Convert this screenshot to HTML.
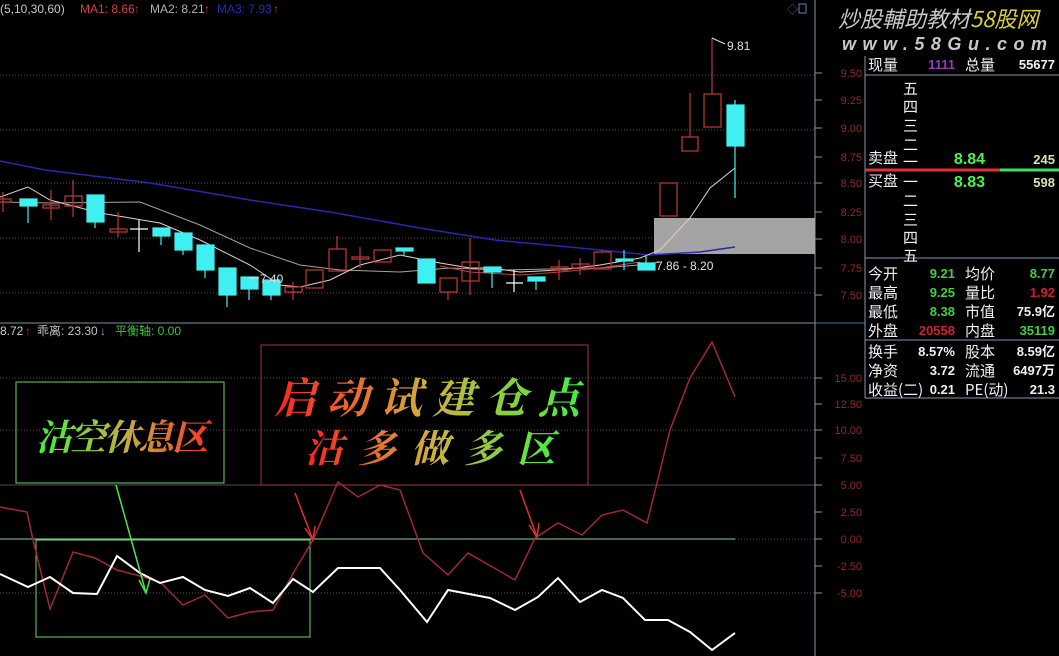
<!DOCTYPE html>
<html><head><meta charset="utf-8"><style>
body{margin:0;background:#000;width:1059px;height:656px;overflow:hidden;font-family:"Liberation Sans","Noto Sans CJK SC",sans-serif;}
svg{display:block}
</style></head><body>
<svg width="1059" height="656" xmlns="http://www.w3.org/2000/svg" font-family="Liberation Sans, Noto Sans CJK SC, sans-serif">
<defs>
<linearGradient id="g1" x1="0" x2="1" y1="0" y2="0"><stop offset="0" stop-color="#40f040"/><stop offset="0.5" stop-color="#c0b040"/><stop offset="1" stop-color="#ff3020"/></linearGradient>
<linearGradient id="g2" x1="0" x2="1" y1="0" y2="0"><stop offset="0" stop-color="#ff2020"/><stop offset="0.5" stop-color="#d0b040"/><stop offset="1" stop-color="#40f040"/></linearGradient>
</defs>
<rect width="1059" height="656" fill="#000"/>
<text x="0" y="13" font-size="12" fill="#c8c8c8">(5,10,30,60)</text>
<text x="80" y="13" font-size="12" fill="#d04050">MA1: 8.66</text><text x="134" y="13" font-size="12" fill="#d03030">↑</text>
<text x="150" y="13" font-size="12" fill="#b0b0b0">MA2: 8.21</text><text x="204" y="13" font-size="12" fill="#d03030">↑</text>
<text x="217" y="13" font-size="12" fill="#2030b0">MA3: 7.93</text><text x="273" y="13" font-size="12" fill="#d03030">↑</text>
<text x="787" y="13" font-size="11" fill="#606060">◇</text><rect x="799" y="4" width="7" height="9" fill="none" stroke="#6080c0"/>
<g stroke="#505050" stroke-dasharray="1,2">
<line x1="0" y1="75" x2="815" y2="75"/><line x1="0" y1="130" x2="815" y2="130"/><line x1="0" y1="183" x2="815" y2="183"/><line x1="0" y1="238" x2="815" y2="238"/><line x1="0" y1="293" x2="815" y2="293"/>
<line x1="0" y1="378" x2="815" y2="378"/><line x1="0" y1="430" x2="815" y2="430"/><line x1="735" y1="539" x2="815" y2="539"/><line x1="0" y1="593" x2="815" y2="593"/>
</g>
<line x1="0" y1="485" x2="815" y2="485" stroke="#505050"/>
<line x1="0" y1="323" x2="815" y2="323" stroke="#8090a0"/>
<line x1="815" y1="323" x2="865" y2="323" stroke="#4070a0"/>
<line x1="815" y1="0" x2="815" y2="656" stroke="#8098b0"/>
<g stroke="#8098b0"><line x1="815" y1="73" x2="822" y2="73"/><line x1="815" y1="100" x2="822" y2="100"/><line x1="815" y1="128" x2="822" y2="128"/><line x1="815" y1="157" x2="822" y2="157"/><line x1="815" y1="183" x2="822" y2="183"/><line x1="815" y1="212" x2="822" y2="212"/><line x1="815" y1="239" x2="822" y2="239"/><line x1="815" y1="268" x2="822" y2="268"/><line x1="815" y1="295" x2="822" y2="295"/>
<line x1="815" y1="378" x2="822" y2="378"/><line x1="815" y1="404" x2="822" y2="404"/><line x1="815" y1="430" x2="822" y2="430"/><line x1="815" y1="458" x2="822" y2="458"/><line x1="815" y1="485" x2="822" y2="485"/><line x1="815" y1="512" x2="822" y2="512"/><line x1="815" y1="539" x2="822" y2="539"/><line x1="815" y1="566" x2="822" y2="566"/><line x1="815" y1="593" x2="822" y2="593"/></g>
<g font-size="11" fill="#902830" text-anchor="end">
<text x="862" y="77">9.50</text><text x="862" y="104">9.25</text><text x="862" y="132">9.00</text><text x="862" y="161">8.75</text><text x="862" y="187">8.50</text><text x="862" y="216">8.25</text><text x="862" y="243">8.00</text><text x="862" y="272">7.75</text><text x="862" y="299">7.50</text>
<text x="862" y="382">15.00</text><text x="862" y="408">12.50</text><text x="862" y="434">10.00</text><text x="862" y="462">7.50</text><text x="862" y="489">5.00</text><text x="862" y="516">2.50</text><text x="862" y="543">0.00</text><text x="862" y="570">-2.50</text><text x="862" y="597">-5.00</text>
</g>
<rect x="654" y="218" width="161" height="36" fill="#a4a4a4"/>
<polyline fill="none" stroke="#2828b0" stroke-width="1.5" points="0,161 45,170 150,183 250,200 330,212 420,228 495,240 580,248 650,255 700,252 735,247"/>
<polyline fill="none" stroke="#a8a098" points="0,202 50,203 140,202 200,225 250,248 300,265 340,270 400,272 450,268 500,270 600,268 640,265 660,262"/>
<polyline fill="none" stroke="#e8d0c8" points="0,197 28,187 50,200 100,213 130,218 160,223 200,240 250,265 280,285 300,287 330,280 360,265 400,255 440,263 470,268 490,268 520,272 560,270 600,265 640,258 660,250 690,218 710,188 735,168"/>
<polyline fill="none" stroke="#c04040" points="440,266 470,272 520,275 560,272 600,268 640,262"/>
<g fill="none" stroke="#c03838" stroke-width="1.2">
<line x1="3" y1="192" x2="3" y2="212"/><rect x="-5" y="199" width="16" height="3"/>
<line x1="51" y1="190" x2="51" y2="220"/><rect x="43" y="205" width="16" height="3"/>
<line x1="73" y1="180" x2="73" y2="217"/><rect x="65" y="196" width="17" height="10"/>
<line x1="118" y1="212" x2="118" y2="237"/><rect x="110" y="229" width="17" height="3"/>
<line x1="293" y1="282" x2="293" y2="300"/><rect x="285" y="287" width="17" height="5"/>
<rect x="306" y="270" width="17" height="18"/>
<line x1="337" y1="236" x2="337" y2="249"/><rect x="329" y="249" width="17" height="22"/>
<line x1="360" y1="247" x2="360" y2="268"/><rect x="352" y="257" width="17" height="2"/>
<rect x="374" y="250" width="17" height="12"/>
<line x1="448" y1="292" x2="448" y2="300"/><rect x="440" y="278" width="17" height="14"/>
<line x1="470" y1="238" x2="470" y2="295"/><rect x="462" y="262" width="17" height="19"/>
<line x1="559" y1="260" x2="559" y2="280"/><rect x="551" y="267" width="17" height="3"/>
<line x1="580" y1="258" x2="580" y2="275"/><rect x="572" y="264" width="17" height="4"/>
<line x1="602" y1="250" x2="602" y2="252"/><rect x="594" y="252" width="17" height="17"/>
<rect x="660" y="183" width="17" height="33"/>
<line x1="690" y1="93" x2="690" y2="137"/><rect x="682" y="137" width="16" height="14"/>
<line x1="712" y1="38" x2="712" y2="94"/><rect x="704" y="94" width="17" height="33"/>
</g>
<g fill="#40f0f0" stroke="#40f0f0" stroke-width="1.2">
<line x1="28" y1="199" x2="28" y2="223"/><rect x="20" y="199" width="17" height="7"/>
<line x1="95" y1="195" x2="95" y2="228"/><rect x="87" y="195" width="17" height="27"/>
<line x1="161" y1="228" x2="161" y2="245"/><rect x="153" y="228" width="17" height="8"/>
<line x1="183" y1="233" x2="183" y2="255"/><rect x="175" y="233" width="17" height="17"/>
<line x1="205" y1="245" x2="205" y2="278"/><rect x="197" y="245" width="17" height="25"/>
<line x1="227" y1="268" x2="227" y2="307"/><rect x="219" y="268" width="17" height="27"/>
<line x1="249" y1="277" x2="249" y2="300"/><rect x="241" y="277" width="17" height="12"/>
<line x1="271" y1="280" x2="271" y2="300"/><rect x="263" y="280" width="17" height="15"/>
<line x1="404" y1="248" x2="404" y2="255"/><rect x="396" y="248" width="17" height="3"/>
<line x1="426" y1="259" x2="426" y2="283"/><rect x="418" y="259" width="17" height="24"/>
<line x1="492" y1="267" x2="492" y2="288"/><rect x="484" y="267" width="17" height="5"/>
<line x1="536" y1="277" x2="536" y2="290"/><rect x="528" y="277" width="17" height="4"/>
<line x1="624" y1="250" x2="624" y2="270"/><rect x="616" y="259" width="17" height="2"/>
<line x1="646" y1="255" x2="646" y2="270"/><rect x="638" y="263" width="17" height="7"/>
<line x1="735" y1="100" x2="735" y2="198"/><rect x="727" y="105" width="17" height="41"/>
</g>
<g stroke="#fff" stroke-width="1.2"><line x1="139" y1="220" x2="139" y2="252"/><line x1="130" y1="229" x2="148" y2="229"/>
<line x1="514" y1="270" x2="514" y2="292"/><line x1="506" y1="283" x2="523" y2="283"/></g>
<g font-size="12" fill="#e0e0e0"><text x="727" y="50">9.81</text><text x="656" y="270">7.86 - 8.20</text><text x="260" y="283">7.40</text></g>
<g stroke="#e0e0e0"><line x1="712" y1="38" x2="725" y2="44"/><line x1="249" y1="278" x2="259" y2="278"/></g>
<text x="0" y="335" font-size="12" fill="#d0d0d0">8.72</text><text x="25" y="335" font-size="12" fill="#c03030">↑</text>
<text x="37" y="335" font-size="12" fill="#c0c0c0">乖离: 23.30</text><text x="100" y="335" font-size="12" fill="#a0a0c0">↓</text>
<text x="115" y="335" font-size="12" fill="#40c040">平衡轴: 0.00</text>
<rect x="16" y="382" width="208" height="101" fill="none" stroke="#70d070"/>
<rect x="261" y="345" width="327" height="140" fill="none" stroke="#a03848"/>
<line x1="0" y1="539" x2="735" y2="539" stroke="#90d090"/>
<rect x="36" y="540" width="274" height="97" fill="none" stroke="#70d070"/>
<polyline fill="none" stroke="#a02838" stroke-width="1.5" points="0,507 27,512 33,540 50,609 73,552 95,558 117,570 140,576 160,582 183,605 205,595 228,618 250,612 273,610 295,570 313,540 338,482 358,497 380,485 400,490 423,553 448,575 468,553 515,580 535,538 558,523 582,535 602,515 623,510 647,523 657,483 670,430 690,378 712,342 735,397"/>
<polyline fill="none" stroke="#ffffff" stroke-width="2" points="0,574 28,587 50,577 73,593 97,594 117,556 140,573 160,583 183,577 205,590 228,596 250,588 273,603 293,579 313,592 338,568 380,568 400,590 427,622 448,590 490,598 515,610 538,597 558,578 580,602 602,590 623,598 645,620 668,620 690,632 712,650 735,633"/>
<g stroke-width="1.5"><line x1="116" y1="485" x2="146" y2="593" stroke="#50e050"/><polyline fill="none" stroke="#50e050" points="139,580 146,593 150,579"/>
<line x1="295" y1="493" x2="313" y2="540" stroke="#e03030"/><polyline fill="none" stroke="#e03030" points="305,528 313,540 315,526"/>
<line x1="520" y1="490" x2="537" y2="537" stroke="#e03030"/><polyline fill="none" stroke="#e03030" points="529,525 537,537 539,523"/></g>
<text x="36" y="450" font-size="36" font-style="italic" font-weight="bold" fill="url(#g1)" font-family="Noto Serif CJK SC, serif" textLength="172">沽空休息区</text>
<text x="274" y="413" font-size="42" font-style="italic" font-weight="bold" fill="url(#g2)" font-family="Noto Serif CJK SC, serif" textLength="306">启动试建仓点</text>
<text x="305" y="462" font-size="38" font-style="italic" font-weight="bold" fill="url(#g2)" font-family="Noto Serif CJK SC, serif" textLength="250">沽多做多区</text>
<text x="838" y="27" font-size="22" font-style="italic" fill="#c8c8c8" font-family="Noto Sans CJK SC, sans-serif">炒股輔助教材</text>
<text x="970" y="27" font-size="22" font-style="italic" fill="#d8d040" font-family="Noto Sans CJK SC, sans-serif">58股网</text>
<text x="842" y="50" font-size="18" font-style="italic" font-weight="bold" fill="#c8c8c8" textLength="205" lengthAdjust="spacing">www.58Gu.com</text>
<g stroke="#8098b0"><line x1="865" y1="56" x2="865" y2="398"/><line x1="865" y1="75" x2="1059" y2="75"/><line x1="865" y1="258" x2="1059" y2="258"/><line x1="865" y1="340" x2="1059" y2="340"/><line x1="865" y1="398" x2="1059" y2="398"/></g>
<g font-size="15" fill="#f0f0f0" font-family="Noto Sans CJK SC, sans-serif">
<text x="868" y="70">现量</text><text x="965" y="70">总量</text>
<text x="903" y="94">五</text><text x="903" y="112">四</text><text x="903" y="131">三</text><text x="903" y="150">二</text><text x="903" y="167">一</text>
<text x="868" y="163">卖盘</text><text x="868" y="186">买盘</text>
<text x="903" y="187">一</text><text x="903" y="206">二</text><text x="903" y="225">三</text><text x="903" y="243">四</text><text x="903" y="261">五</text>
<text x="868" y="279">今开</text><text x="965" y="279">均价</text>
<text x="868" y="298">最高</text><text x="965" y="298">量比</text>
<text x="868" y="317">最低</text><text x="965" y="317">市值</text>
<text x="868" y="336">外盘</text><text x="965" y="336">内盘</text>
<text x="868" y="357">换手</text><text x="965" y="357">股本</text>
<text x="868" y="376">净资</text><text x="965" y="376">流通</text>
<text x="868" y="395">收益(二)</text><text x="965" y="395">PE(动)</text>
</g>
<line x1="865" y1="170" x2="1000" y2="170" stroke="#e03040" stroke-width="3"/><line x1="1000" y1="170" x2="1059" y2="170" stroke="#40e060" stroke-width="3"/>
<g font-size="13" font-weight="bold" text-anchor="end">
<text x="955" y="69" fill="#9040b0">1111</text><text x="1055" y="69" fill="#f0f0f0">55677</text>
<text x="985" y="164" font-size="16" fill="#50f050">8.84</text><text x="1055" y="164" fill="#e0e0b0">245</text>
<text x="985" y="187" font-size="16" fill="#50f050">8.83</text><text x="1055" y="187" fill="#e0e0b0">598</text>
<text x="955" y="278" fill="#40d040">9.21</text><text x="1055" y="278" fill="#40d040">8.77</text>
<text x="955" y="297" fill="#40d040">9.25</text><text x="1055" y="297" fill="#d02030">1.92</text>
<text x="955" y="316" fill="#40d040">8.38</text><text x="1055" y="316" fill="#f0f0f0">75.9亿</text>
<text x="955" y="335" fill="#d02030">20558</text><text x="1055" y="335" fill="#40d040">35119</text>
<text x="955" y="356" fill="#f0f0f0">8.57%</text><text x="1055" y="356" fill="#f0f0f0">8.59亿</text>
<text x="955" y="375" fill="#f0f0f0">3.72</text><text x="1055" y="375" fill="#f0f0f0">6497万</text>
<text x="955" y="394" fill="#f0f0f0">0.21</text><text x="1055" y="394" fill="#f0f0f0">21.3</text>
</g>
</svg>
</body></html>
